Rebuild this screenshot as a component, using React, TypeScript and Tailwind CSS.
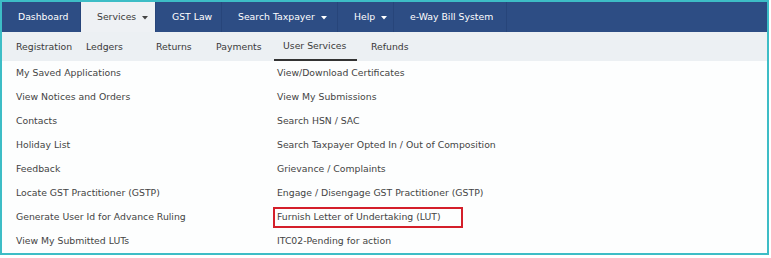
const font = { fontFamily: "Verdana, 'DejaVu Sans', sans-serif" };

const topItems = [
	{ label: "Dashboard", w: "w-[79px]", caret: false },
	{ label: "Services", w: "w-[75px]", caret: true, active: true },
	{ label: "GST Law", w: "w-[66px]", caret: false },
	{ label: "Search Taxpayer", w: "w-[116px]", caret: true },
	{ label: "Help", w: "w-[56px]", caret: true },
	{ label: "e-Way Bill System", w: "w-[113px]", caret: false },
];

const subItems = [
	{ label: "Registration", w: "w-[70px]" },
	{ label: "Ledgers", w: "w-[70px]" },
	{ label: "Returns", w: "w-[60px]" },
	{ label: "Payments", w: "w-[67px]" },
	{ label: "User Services", w: "w-[83px] mr-[5px]", active: true },
	{ label: "Refunds", w: "w-[70px]" },
];

const left = [
	"My Saved Applications",
	"View Notices and Orders",
	"Contacts",
	"Holiday List",
	"Feedback",
	"Locate GST Practitioner (GSTP)",
	"Generate User Id for Advance Ruling",
	"View My Submitted LUTs",
];

const right = [
	"View/Download Certificates",
	"View My Submissions",
	"Search HSN / SAC",
	"Search Taxpayer Opted In / Out of Composition",
	"Grievance / Complaints",
	"Engage / Disengage GST Practitioner (GSTP)",
	"Furnish Letter of Undertaking (LUT)",
	"ITC02-Pending for action",
];

function Caret({ dark }: { dark?: boolean }) {
	return (
		<svg width="6" height="4" viewBox="0 0 6 4" className="ml-[6px] mt-[1px]">
			<path d="M0 0h6L3 3.5z" fill={dark ? "#444" : "#fff"} />
		</svg>
	);
}

export default function App() {
	return (
		<div className="h-[258px] w-[771px] bg-white text-[9.3px]" style={font}>
			<div className="h-[255px] w-[769px] border-2 border-[#3dbdc6] bg-[#fdfefe]">
				<div className="flex h-[30px] bg-[#2d4d84]">
					{topItems.map((item) => (
						<div
							key={item.label}
							className={`flex h-full items-center border-r border-[#27457a] pl-[16px] ${item.w} ${
								item.active ? "bg-[#eef1f4] text-[#3a3a3a]" : "text-white"
							}`}
						>
							<span>{item.label}</span>
							{item.caret ? <Caret dark={item.active} /> : null}
						</div>
					))}
				</div>
				<div className="flex h-[29px] bg-[#ecf0f3] pl-[5px] text-[#3a3a3a]">
					{subItems.map((item) => (
						<div
							key={item.label}
							className={`flex h-full items-center pl-[9px] ${item.w} ${
								item.active ? "border-b-2 border-[#333]" : ""
							}`}
						>
							{item.label}
						</div>
					))}
				</div>
				<div className="flex text-[#444]">
					<div className="w-[275px] pl-[14px]">
						{left.map((t) => (
							<div key={t} className="flex h-[24px] items-center">
								{t}
							</div>
						))}
					</div>
					<div>
						{right.map((t) => (
							<div key={t} className="flex h-[24px] items-center">
								{t.startsWith("Furnish") ? (
									<span className="-ml-[4px] flex h-[21px] w-[190px] items-center border-2 border-[#d41f2a] pl-[2px]">
										{t}
									</span>
								) : (
									t
								)}
							</div>
						))}
					</div>
				</div>
			</div>
		</div>
	);
}
